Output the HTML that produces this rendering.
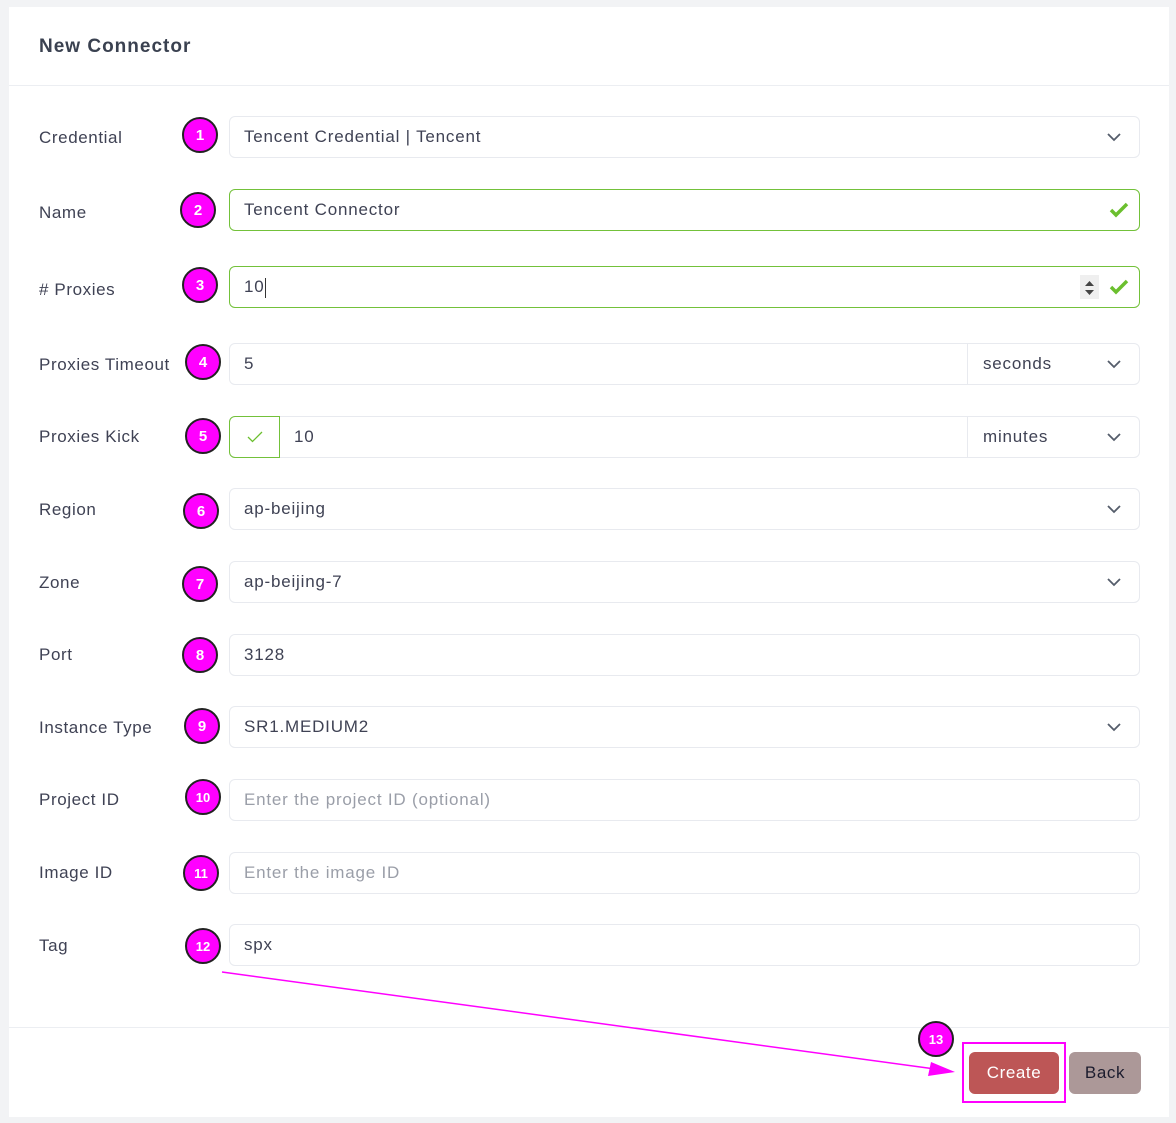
<!DOCTYPE html>
<html><head><style>
*{box-sizing:border-box;margin:0;padding:0}
body{width:1176px;height:1123px;background:#f2f3f5;font-family:"Liberation Sans",sans-serif;position:relative;overflow:hidden;color:#3f4254}
.card{position:absolute;left:9px;top:7px;width:1160px;height:1110px;background:#fff}
.hdr{position:absolute;left:9px;top:85px;width:1160px;height:1px;background:#eceef2}
.ftr{position:absolute;left:9px;top:1027px;width:1160px;height:1px;background:#eceef2}
h1{position:absolute;left:39px;top:36px;font-size:19px;font-weight:bold;color:#3a4150;letter-spacing:1px}
.lbl{position:absolute;left:39px;font-size:17px;color:#3f4254;letter-spacing:0.6px;margin-top:1px}
.f{position:absolute;left:229px;width:911px;height:42px;border:1px solid #e8eaef;border-radius:6px;font-size:17px;padding-left:14px;line-height:40px;color:#3f4254;letter-spacing:0.8px}
.g{border-color:#73c13a}
.ph{color:#9a9ea8}
.chev{position:absolute;right:18px;top:15px}
.b{position:absolute;width:36px;height:36px;border-radius:50%;background:#f0f;border:2px solid #222;color:#fff;font-weight:bold;font-size:15px;text-align:center;line-height:34px}
.sep{position:absolute;top:0;bottom:0;width:1px;background:#e8eaef}
</style></head><body>
<div class="card"></div>
<h1>New Connector</h1>
<div class="hdr"></div><div class="ftr"></div>

<div class="lbl" style="top:127px">Credential</div>
<div class="f" style="top:116px">Tencent Credential | Tencent<svg class="chev" width="14" height="10" viewBox="0 0 14 10"><path d="M1 2l6 6 6-6" fill="none" stroke="#555d6b" stroke-width="1.8"/></svg></div>
<div class="lbl" style="top:202px">Name</div>
<div class="f g" style="top:189px">Tencent Connector<svg style="position:absolute;right:10px;top:11px" width="20" height="18" viewBox="0 0 20 18"><path d="M2 9l5 5L18 3" fill="none" stroke="#6bbf2e" stroke-width="3.5"/></svg></div>
<div class="lbl" style="top:279px"># Proxies</div>
<div class="f g" style="top:266px">10<span style="display:inline-block;width:1px;height:20px;background:#333;vertical-align:middle"></span><div style="position:absolute;right:40px;top:8px;width:19px;height:24px;background:#efefef"><svg width="19" height="24" viewBox="0 0 19 24"><path d="M5 10l4.5-5 4.5 5z M5 14l4.5 5 4.5-5z" fill="#444"/></svg></div><svg style="position:absolute;right:10px;top:11px" width="20" height="18" viewBox="0 0 20 18"><path d="M2 9l5 5L18 3" fill="none" stroke="#6bbf2e" stroke-width="3.5"/></svg></div>
<div class="lbl" style="top:354px">Proxies Timeout</div>
<div class="f" style="top:343px">5<div class="sep" style="left:737px"></div><span style="position:absolute;left:753px">seconds</span><svg class="chev" width="14" height="10" viewBox="0 0 14 10"><path d="M1 2l6 6 6-6" fill="none" stroke="#555d6b" stroke-width="1.8"/></svg></div>
<div class="lbl" style="top:426px">Proxies Kick</div>
<div class="f" style="top:416px;padding-left:64px">10<div style="position:absolute;left:-1px;top:-1px;width:51px;height:42px;border:1px solid #73c13a;border-radius:6px 0 0 6px"><svg style="position:absolute;left:17px;top:14px" width="16" height="12" viewBox="0 0 16 12"><path d="M1 6l4.5 4.5L15 1" fill="none" stroke="#6bbf2e" stroke-width="1.3"/></svg></div><div class="sep" style="left:737px"></div><span style="position:absolute;left:753px">minutes</span><svg class="chev" width="14" height="10" viewBox="0 0 14 10"><path d="M1 2l6 6 6-6" fill="none" stroke="#555d6b" stroke-width="1.8"/></svg></div>
<div class="lbl" style="top:499px">Region</div>
<div class="f" style="top:488px">ap-beijing<svg class="chev" width="14" height="10" viewBox="0 0 14 10"><path d="M1 2l6 6 6-6" fill="none" stroke="#555d6b" stroke-width="1.8"/></svg></div>
<div class="lbl" style="top:572px">Zone</div>
<div class="f" style="top:561px">ap-beijing-7<svg class="chev" width="14" height="10" viewBox="0 0 14 10"><path d="M1 2l6 6 6-6" fill="none" stroke="#555d6b" stroke-width="1.8"/></svg></div>
<div class="lbl" style="top:644px">Port</div>
<div class="f" style="top:634px">3128</div>
<div class="lbl" style="top:717px">Instance Type</div>
<div class="f" style="top:706px">SR1.MEDIUM2<svg class="chev" width="14" height="10" viewBox="0 0 14 10"><path d="M1 2l6 6 6-6" fill="none" stroke="#555d6b" stroke-width="1.8"/></svg></div>
<div class="lbl" style="top:789px">Project ID</div>
<div class="f ph" style="top:779px">Enter the project ID (optional)</div>
<div class="lbl" style="top:862px">Image ID</div>
<div class="f ph" style="top:852px">Enter the image ID</div>
<div class="lbl" style="top:935px">Tag</div>
<div class="f" style="top:924px">spx</div>

<div class="b" style="left:182px;top:117px">1</div>
<div class="b" style="left:180px;top:192px">2</div>
<div class="b" style="left:182px;top:267px">3</div>
<div class="b" style="left:185px;top:344px">4</div>
<div class="b" style="left:185px;top:418px">5</div>
<div class="b" style="left:183px;top:493px">6</div>
<div class="b" style="left:182px;top:566px">7</div>
<div class="b" style="left:182px;top:637px">8</div>
<div class="b" style="left:184px;top:708px">9</div>
<div class="b" style="left:185px;top:779px;font-size:13px">10</div>
<div class="b" style="left:183px;top:855px;font-size:13px">11</div>
<div class="b" style="left:185px;top:928px;font-size:13px">12</div>
<div class="b" style="left:918px;top:1021px;font-size:13px">13</div>

<svg style="position:absolute;left:0;top:0" width="1176" height="1123"><line x1="222" y1="972" x2="935" y2="1069" stroke="#f0f" stroke-width="1.5"/><path d="M955 1072l-24-10-3 14z" fill="#f0f"/></svg>
<div style="position:absolute;left:962px;top:1042px;width:104px;height:61px;border:2px solid #f0f"></div>
<div style="position:absolute;left:969px;top:1052px;width:90px;height:42px;background:#bd5656;border-radius:6px;color:#fff;font-size:17px;text-align:center;line-height:42px;letter-spacing:0.6px">Create</div>
<div style="position:absolute;left:1069px;top:1052px;width:72px;height:42px;background:#ac9898;border-radius:6px;color:#1c1c2e;font-size:17px;text-align:center;line-height:42px;letter-spacing:0.6px">Back</div>
</body></html>
